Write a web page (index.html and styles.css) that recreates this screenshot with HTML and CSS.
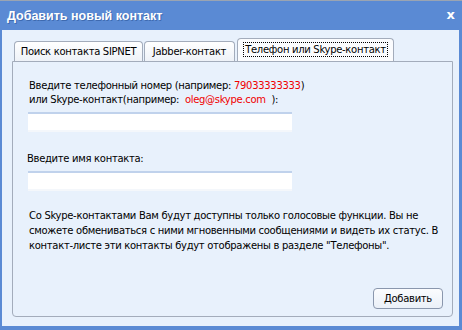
FILE: index.html
```html
<!DOCTYPE html>
<html lang="ru">
<head>
    <meta charset="UTF-8">
    <title>Добавить новый контакт</title>
    <link rel="stylesheet" href="styles.css">
</head>
<body>
    <div class="window">
        <div class="titlebar">
            <span class="title">Добавить новый контакт</span>
            <span class="close">x</span>
        </div>
        <div class="window-body">
            <div class="tabs">
                <div class="tab tab-sipnet">Поиск контакта SIPNET</div>
                <div class="tab tab-jabber">Jabber-контакт</div>
                <div class="tab active"><span class="focus">Телефон или Skype-контакт</span></div>
            </div>
            <div class="panel">
                <div class="field-label">
                    Введите телефонный номер (например: <span class="red">79033333333</span>)<br>
                    или Skype-контакт(например: &nbsp;<span class="red">oleg@skype.com</span>&nbsp; ):
                </div>
                <input type="text" class="field-input first">
                <div class="field-label second">Введите имя контакта:</div>
                <input type="text" class="field-input">
                <p class="note">Со Skype-контактами Вам будут доступны только голосовые функции. Вы не сможете обмениваться с ними мгновенными сообщениями и видеть их статус. В контакт-листе эти контакты будут отображены в разделе "Телефоны".</p>
                <div class="actions">
                    <button class="add-btn">Добавить</button>
                </div>
            </div>
        </div>
    </div>
</body>
</html>
```

FILE: styles.css
```css
body {
    margin: 0;
    font-family: 'DejaVu Sans', Verdana, sans-serif;
    font-size: 10px;
    letter-spacing: -0.3px;
    color: #000;
}
.window {
    width: 462px;
    height: 330px;
    box-sizing: border-box;
    background: #5a8ad4;
    border-top: 1px solid #9aa4b2;
    display: flex;
    flex-direction: column;
}
.titlebar {
    height: 29px;
    display: flex;
    align-items: center;
    justify-content: space-between;
    padding: 0 7px 0 7px;
    color: #fff;
    font-weight: bold;
    letter-spacing: 0;
}
.title {
    font-family: 'Liberation Sans', Arial, sans-serif;
    font-size: 12.5px;
    text-shadow: 1px 1px 0 #3e6ab0;
}
.close {
    font-size: 13px;
    font-family: 'DejaVu Sans', sans-serif;
    font-weight: bold;
    margin-top: -3px;
}
.window-body {
    flex: 1;
    margin: 0 3px 4px 2px;
    background: #e8f1fc;
    padding: 7px 6px 9px 10px;
    display: flex;
    flex-direction: column;
}
.tabs {
    display: flex;
    align-items: flex-end;
    padding-left: 2px;
    height: 24px;
}
.tab {
    height: 20px;
    box-sizing: border-box;
    border: 1px solid #a3acbb;
    border-bottom: none;
    border-radius: 4px 4px 0 0;
    background: linear-gradient(#ffffff, #eef2f8);
    padding-top: 4px;
    margin-right: 1px;
    white-space: nowrap;
    text-align: center;
}
.tab-sipnet {
    width: 129px;
}
.tab-jabber {
    width: 91px;
}
.tab.active {
    width: 157px;
    height: 24px;
    margin-left: 1px;
    margin-bottom: -1px;
    background: #fbfcfe;
    padding-top: 5px;
}
.focus {
    border: 1px dotted #000;
    padding: 1px 1px;
}
.panel {
    flex: 1;
    border: 1px solid #a3acbb;
    border-radius: 0 0 4px 4px;
    background: #e8f1fc;
    padding: 17px 0 0 14px;
    display: flex;
    flex-direction: column;
}
.field-label {
    line-height: 14px;
    padding-left: 2px;
}
.field-label.second {
    margin-top: 20px;
    padding-left: 0;
}
.red {
    color: #f00000;
}
.field-input {
    width: 264px;
    height: 20px;
    box-sizing: border-box;
    margin: 5px 0 0 1px;
    border: none;
    border-top: 2px solid #c0d2ec;
    border-bottom: 2px solid #f4f7fb;
    background: #fff;
    outline: none;
}
.note {
    margin: 17px 8px 0 2px;
    line-height: 15px;
}
.actions {
    margin-top: auto;
    display: flex;
    justify-content: flex-end;
    padding: 0 9px 7px 0;
}
.add-btn {
    width: 70px;
    height: 21px;
    font-family: 'DejaVu Sans', Verdana, sans-serif;
    font-size: 10px;
    letter-spacing: -0.3px;
    border: 1px solid #8a97ad;
    border-radius: 4px;
    background: linear-gradient(#fbfcfe, #eaf0f8);
    padding: 0;
    color: #000;
}
```
